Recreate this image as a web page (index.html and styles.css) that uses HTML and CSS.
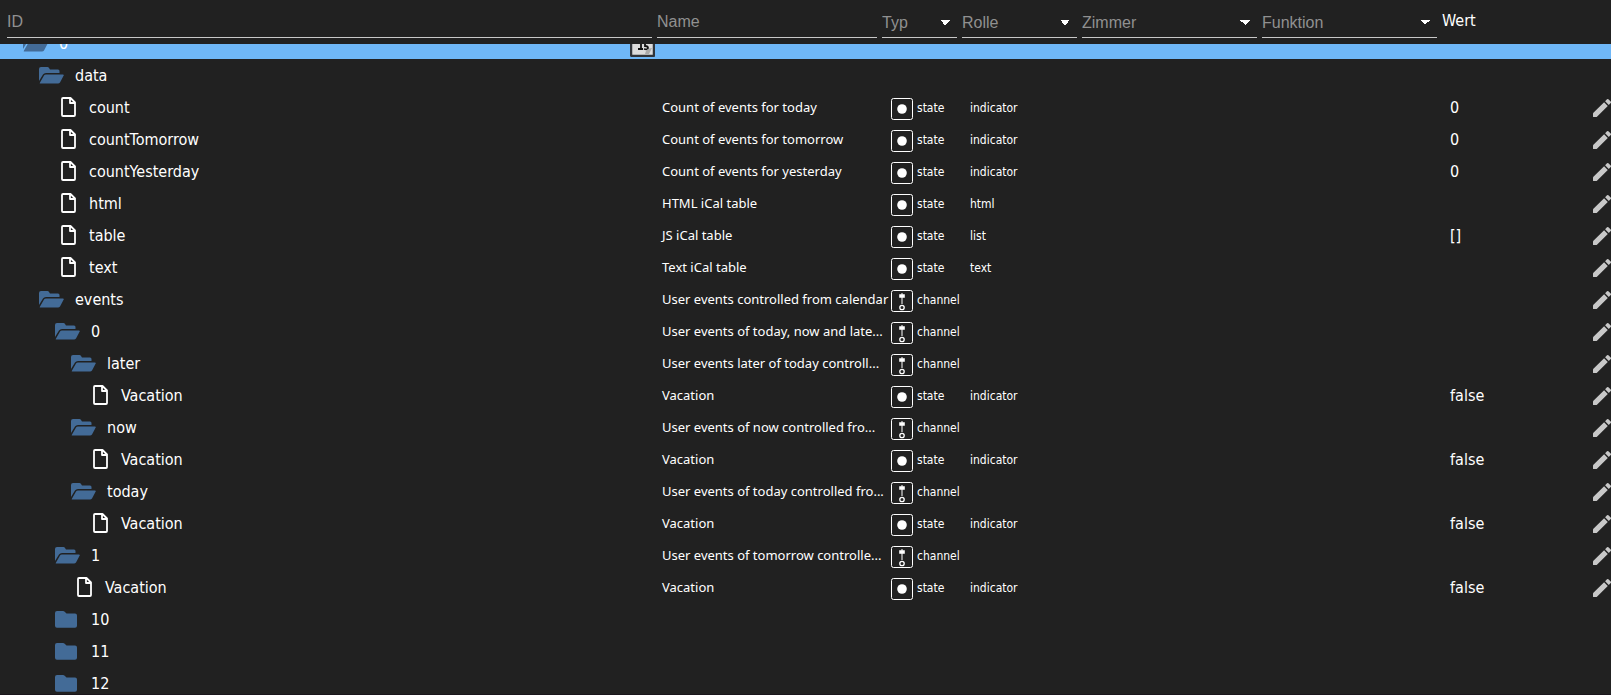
FILE: index.html
```
<!DOCTYPE html>
<html lang="de">
<head>
<meta charset="utf-8">
<title>Objekte</title>
<link rel="stylesheet" href="styles.css">
</head>
<body>
<svg class="sprite" aria-hidden="true">
  <symbol id="open" viewBox="0 0 25 17"><path d="M0 15V2Q0 0 2 0H8.500Q9.500 0 10 1L11 2.500H19Q20.500 2.500 20.500 4V6H7Q5 6 4 7.500L0 14Z"/><path d="M1 16.500Q0.500 16.500 1 15.500L5 8.500Q5.500 7.500 7 7.500H24Q25.200 7.500 24.700 8.500L21 15.500Q20.300 16.500 19 16.500Z"/></symbol>
  <symbol id="closed" viewBox="0 0 22 17"><path d="M0 2Q0 0 2 0H8Q9 0 9.700 0.800L11.500 2.600H20Q22 2.600 22 4.600V14.800Q22 16.800 20 16.800H2Q0 16.800 0 14.800Z"/></symbol>
  <symbol id="file" viewBox="0 0 15 20"><path d="M2 1H9.500L14 5.500V18Q14 19 13 19H2Q1 19 1 18V2Q1 1 2 1ZM9 1V6H14" fill="none" stroke="currentColor" stroke-width="1.800" stroke-linejoin="round"/></symbol>
  <symbol id="state" viewBox="0 0 22 22"><rect x=".5" y=".5" width="21" height="21" rx="2" fill="none" stroke="currentColor"/><circle cx="11" cy="11" r="4.800"/></symbol>
  <symbol id="channel" viewBox="0 0 22 22"><rect x=".5" y=".5" width="21" height="21" rx="2" fill="none" stroke="currentColor"/><path d="M10.500 3h1v1.200h2.300v3.600h-2.300V14h-1V7.800h-2.300V4.200h2.300Z"/><circle cx="11" cy="17.500" r="2.200" fill="none" stroke="currentColor" stroke-width="1.300"/></symbol>
  <symbol id="edit" viewBox="0 0 24 24"><path d="M3.400 16.800Q3 17.300 3 18V20.500Q3 21 3.500 21H6Q6.700 21 7.200 20.500L17.800 9.900l-3.700-3.700zM20.700 7a1 1 0 0 0 0-1.400l-2.300-2.300a1 1 0 0 0-1.400 0l-1.900 1.900 3.700 3.700z"/></symbol>
</svg>
<header class="filters">
  <input type="text" placeholder="ID" aria-label="ID">
  <input type="text" placeholder="Name" aria-label="Name">
  <select aria-label="Typ"><option>Typ</option></select>
  <select aria-label="Rolle"><option>Rolle</option></select>
  <select aria-label="Zimmer"><option>Zimmer</option></select>
  <select aria-label="Funktion"><option>Funktion</option></select>
  <span class="heading">Wert</span>
</header>
<main class="viewport">
<table class="tree">
  <colgroup><col><col class="c-name"><col class="c-type"><col class="c-role"><col class="c-value"><col class="c-edit"></colgroup>
  <tbody>
  <tr class="selected"><td><div class="id l0"><svg class="open"><use href="#open"/></svg>0<svg class="adapter" viewBox="0 0 25 25"><rect x="1" y="1" width="23" height="23" rx="1" fill="#dcdcdc" stroke="#30343a" stroke-width="2.500"/><path d="M8 10l3-2v9M8 17h5M18 11h-3v3q3 0 3 2t-4 1" fill="none" stroke="#111" stroke-width="1.800"/><path d="M15 22q1-6 7-6l-3 6z" fill="#aaa"/></svg></div></td><td></td><td></td><td></td><td></td><td></td></tr>
  <tr><td><div class="id l1"><svg class="open"><use href="#open"/></svg>data</div></td><td></td><td></td><td></td><td></td><td></td></tr>
  <tr><td><div class="id l2"><svg class="file"><use href="#file"/></svg>count</div></td><td class="name">Count of events for today</td><td><div class="type"><svg><use href="#state"/></svg>state</div></td><td class="role">indicator</td><td>0</td><td><button aria-label="Bearbeiten"><svg><use href="#edit"/></svg></button></td></tr>
  <tr><td><div class="id l2"><svg class="file"><use href="#file"/></svg>countTomorrow</div></td><td class="name">Count of events for tomorrow</td><td><div class="type"><svg><use href="#state"/></svg>state</div></td><td class="role">indicator</td><td>0</td><td><button aria-label="Bearbeiten"><svg><use href="#edit"/></svg></button></td></tr>
  <tr><td><div class="id l2"><svg class="file"><use href="#file"/></svg>countYesterday</div></td><td class="name">Count of events for yesterday</td><td><div class="type"><svg><use href="#state"/></svg>state</div></td><td class="role">indicator</td><td>0</td><td><button aria-label="Bearbeiten"><svg><use href="#edit"/></svg></button></td></tr>
  <tr><td><div class="id l2"><svg class="file"><use href="#file"/></svg>html</div></td><td class="name">HTML iCal table</td><td><div class="type"><svg><use href="#state"/></svg>state</div></td><td class="role">html</td><td></td><td><button aria-label="Bearbeiten"><svg><use href="#edit"/></svg></button></td></tr>
  <tr><td><div class="id l2"><svg class="file"><use href="#file"/></svg>table</div></td><td class="name">JS iCal table</td><td><div class="type"><svg><use href="#state"/></svg>state</div></td><td class="role">list</td><td>[]</td><td><button aria-label="Bearbeiten"><svg><use href="#edit"/></svg></button></td></tr>
  <tr><td><div class="id l2"><svg class="file"><use href="#file"/></svg>text</div></td><td class="name">Text iCal table</td><td><div class="type"><svg><use href="#state"/></svg>state</div></td><td class="role">text</td><td></td><td><button aria-label="Bearbeiten"><svg><use href="#edit"/></svg></button></td></tr>
  <tr><td><div class="id l1"><svg class="open"><use href="#open"/></svg>events</div></td><td class="name">User events controlled from calendar</td><td><div class="type"><svg><use href="#channel"/></svg>channel</div></td><td></td><td></td><td><button aria-label="Bearbeiten"><svg><use href="#edit"/></svg></button></td></tr>
  <tr><td><div class="id l2"><svg class="open"><use href="#open"/></svg>0</div></td><td class="name">User events of today, now and late...</td><td><div class="type"><svg><use href="#channel"/></svg>channel</div></td><td></td><td></td><td><button aria-label="Bearbeiten"><svg><use href="#edit"/></svg></button></td></tr>
  <tr><td><div class="id l3"><svg class="open"><use href="#open"/></svg>later</div></td><td class="name">User events later of today controll...</td><td><div class="type"><svg><use href="#channel"/></svg>channel</div></td><td></td><td></td><td><button aria-label="Bearbeiten"><svg><use href="#edit"/></svg></button></td></tr>
  <tr><td><div class="id l4"><svg class="file"><use href="#file"/></svg>Vacation</div></td><td class="name">Vacation</td><td><div class="type"><svg><use href="#state"/></svg>state</div></td><td class="role">indicator</td><td>false</td><td><button aria-label="Bearbeiten"><svg><use href="#edit"/></svg></button></td></tr>
  <tr><td><div class="id l3"><svg class="open"><use href="#open"/></svg>now</div></td><td class="name">User events of now controlled fro...</td><td><div class="type"><svg><use href="#channel"/></svg>channel</div></td><td></td><td></td><td><button aria-label="Bearbeiten"><svg><use href="#edit"/></svg></button></td></tr>
  <tr><td><div class="id l4"><svg class="file"><use href="#file"/></svg>Vacation</div></td><td class="name">Vacation</td><td><div class="type"><svg><use href="#state"/></svg>state</div></td><td class="role">indicator</td><td>false</td><td><button aria-label="Bearbeiten"><svg><use href="#edit"/></svg></button></td></tr>
  <tr><td><div class="id l3"><svg class="open"><use href="#open"/></svg>today</div></td><td class="name">User events of today controlled fro...</td><td><div class="type"><svg><use href="#channel"/></svg>channel</div></td><td></td><td></td><td><button aria-label="Bearbeiten"><svg><use href="#edit"/></svg></button></td></tr>
  <tr><td><div class="id l4"><svg class="file"><use href="#file"/></svg>Vacation</div></td><td class="name">Vacation</td><td><div class="type"><svg><use href="#state"/></svg>state</div></td><td class="role">indicator</td><td>false</td><td><button aria-label="Bearbeiten"><svg><use href="#edit"/></svg></button></td></tr>
  <tr><td><div class="id l2"><svg class="open"><use href="#open"/></svg>1</div></td><td class="name">User events of tomorrow controlle...</td><td><div class="type"><svg><use href="#channel"/></svg>channel</div></td><td></td><td></td><td><button aria-label="Bearbeiten"><svg><use href="#edit"/></svg></button></td></tr>
  <tr><td><div class="id l3"><svg class="file"><use href="#file"/></svg>Vacation</div></td><td class="name">Vacation</td><td><div class="type"><svg><use href="#state"/></svg>state</div></td><td class="role">indicator</td><td>false</td><td><button aria-label="Bearbeiten"><svg><use href="#edit"/></svg></button></td></tr>
  <tr><td><div class="id l2"><svg class="closed"><use href="#closed"/></svg>10</div></td><td></td><td></td><td></td><td></td><td></td></tr>
  <tr><td><div class="id l2"><svg class="closed"><use href="#closed"/></svg>11</div></td><td></td><td></td><td></td><td></td><td></td></tr>
  <tr><td><div class="id l2"><svg class="closed"><use href="#closed"/></svg>12</div></td><td></td><td></td><td></td><td></td><td></td></tr>
  </tbody>
</table>
</main>
</body>
</html>
```
FILE: styles.css
```
* { box-sizing: border-box; }
body {
  margin: 0;
  height: 100vh;
  display: flex;
  flex-direction: column;
  overflow: hidden;
  background: #212121;
  color: #fff;
  font: 16px/20px "DejaVu Sans Condensed", "DejaVu Sans", sans-serif;
}
.sprite { display: none; }
svg { fill: currentColor; flex: none; display: block; }

.filters {
  display: grid;
  grid-template-columns: 1fr 220px 75px 115px 175px 175px 169px;
  gap: 5px;
  padding: 6px 0 6px 7px;
  height: 44px;
  flex: none;
}
.filters input, .filters select {
  width: 100%;
  min-width: 0;
  padding: 0;
  border: 0;
  border-bottom: 1px solid #c8c8c8;
  border-radius: 0;
  background: transparent;
  color: #909090;
  font: 16px/20px "Liberation Sans", Arial, sans-serif;
  outline: none;
}
.filters input::placeholder { color: #909090; opacity: 1; }
.filters select {
  appearance: none;
  padding-top: 2px;
  background: conic-gradient(from -45deg at 50% 100%, #fff 90deg, transparent 0) right 7px top 14px / 10px 5px no-repeat;
}
.heading { padding-top: 5px; }

.viewport { flex: 1; min-height: 0; overflow: hidden; border-bottom: 1px solid #1a161c; }
.tree { width: 100%; margin-top: -17px; table-layout: fixed; border-collapse: collapse; }
.c-name { width: 229px; }
.c-type { width: 79px; }
.c-role { width: 480px; }
.c-value { width: 140px; }
.c-edit { width: 21px; }
.tree td { height: 32px; padding: 2px 0 0; white-space: nowrap; }
.selected { background: #6fb7f7; }

.id { display: flex; align-items: center; height: 30px; }
.l0 { padding-left: 23px; }
.l1 { padding-left: 39px; }
.l2 { padding-left: 55px; }
.l3 { padding-left: 71px; }
.l4 { padding-left: 87px; }
.open, .closed { height: 17px; margin-top: -2px; color: #436b97; }
.open { width: 25px; margin-right: 11px; }
.closed { width: 22px; margin-right: 14px; }
.file { width: 15px; height: 20px; margin: -2px 13px 0 6px; }
.adapter { width: 25px; height: 25px; margin: 0 7px 0 auto; }

.tree .name { padding-top: 0; font: 13px/20px "Noto Sans", sans-serif; }
.type { display: flex; align-items: center; gap: 4px; font-size: 12px; }
.type svg { width: 22px; height: 22px; margin-top: 1px; }
.tree .role { font-size: 12px; }
.tree button { display: block; margin: 0; padding: 0; border: 0; background: none; color: #c8c8c8; }
.tree button svg { width: 24px; height: 24px; }
```
